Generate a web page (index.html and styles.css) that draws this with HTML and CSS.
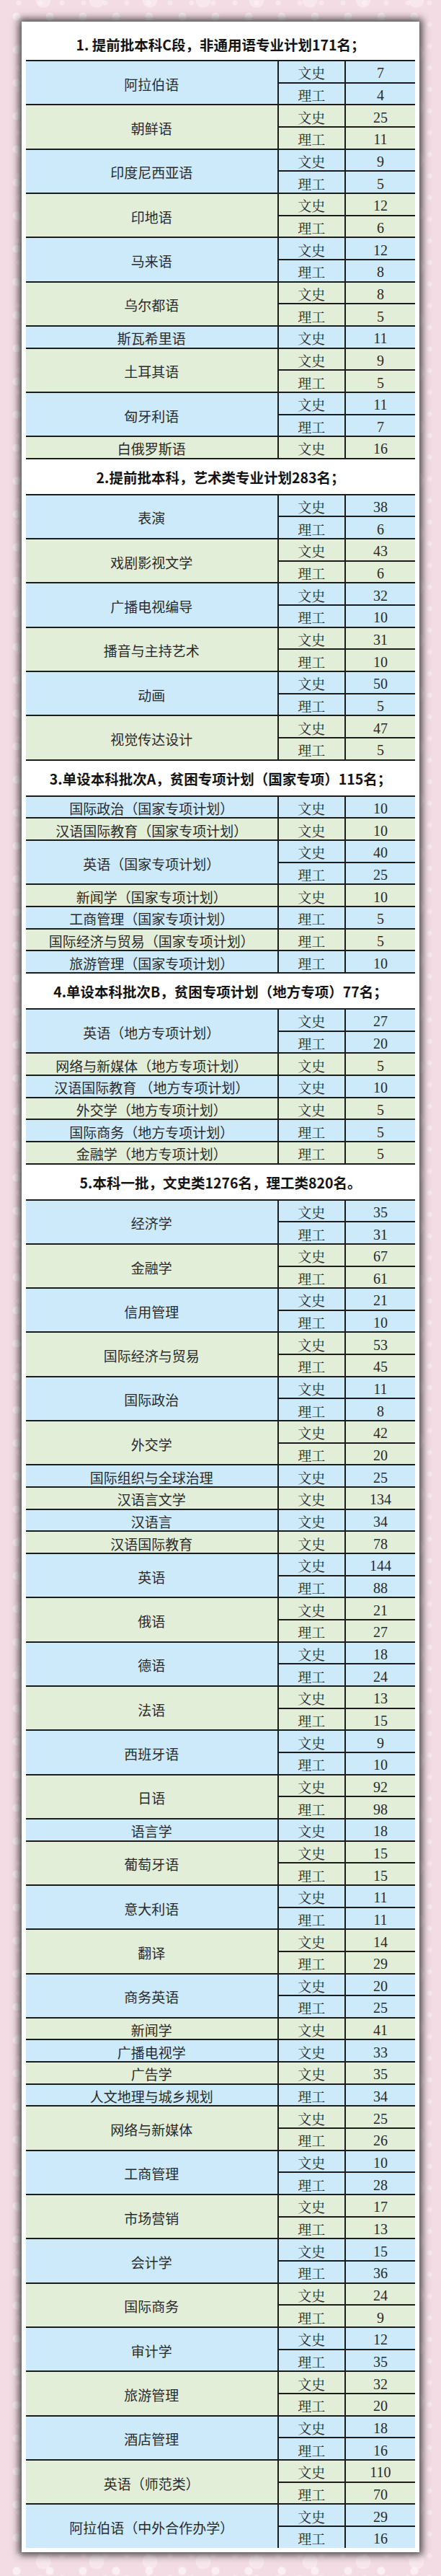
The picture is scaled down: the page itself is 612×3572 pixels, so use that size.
FILE: index.html
```html
<!DOCTYPE html>
<html lang="zh-CN">
<head>
<meta charset="utf-8">
<title>招生计划</title>
<link rel="stylesheet" href="styles.css">
</head>
<body>
<div class="page">
<div class="card">

<h2 class="title first">1. 提前批本科C段，非通用语专业计划171名；</h2>
<div class="table">
  <div class="row"><div class="name">阿拉伯语</div><div class="subs"><div class="sub"><span class="type">文史</span><span class="num">7</span></div><div class="sub"><span class="type">理工</span><span class="num">4</span></div></div></div>
  <div class="row"><div class="name">朝鲜语</div><div class="subs"><div class="sub"><span class="type">文史</span><span class="num">25</span></div><div class="sub"><span class="type">理工</span><span class="num">11</span></div></div></div>
  <div class="row"><div class="name">印度尼西亚语</div><div class="subs"><div class="sub"><span class="type">文史</span><span class="num">9</span></div><div class="sub"><span class="type">理工</span><span class="num">5</span></div></div></div>
  <div class="row"><div class="name">印地语</div><div class="subs"><div class="sub"><span class="type">文史</span><span class="num">12</span></div><div class="sub"><span class="type">理工</span><span class="num">6</span></div></div></div>
  <div class="row"><div class="name">马来语</div><div class="subs"><div class="sub"><span class="type">文史</span><span class="num">12</span></div><div class="sub"><span class="type">理工</span><span class="num">8</span></div></div></div>
  <div class="row"><div class="name">乌尔都语</div><div class="subs"><div class="sub"><span class="type">文史</span><span class="num">8</span></div><div class="sub"><span class="type">理工</span><span class="num">5</span></div></div></div>
  <div class="row"><div class="name">斯瓦希里语</div><div class="subs"><div class="sub"><span class="type">文史</span><span class="num">11</span></div></div></div>
  <div class="row"><div class="name">土耳其语</div><div class="subs"><div class="sub"><span class="type">文史</span><span class="num">9</span></div><div class="sub"><span class="type">理工</span><span class="num">5</span></div></div></div>
  <div class="row"><div class="name">匈牙利语</div><div class="subs"><div class="sub"><span class="type">文史</span><span class="num">11</span></div><div class="sub"><span class="type">理工</span><span class="num">7</span></div></div></div>
  <div class="row"><div class="name">白俄罗斯语</div><div class="subs"><div class="sub"><span class="type">文史</span><span class="num">16</span></div></div></div>
</div>

<h2 class="title">2.提前批本科，艺术类专业计划283名；</h2>
<div class="table">
  <div class="row"><div class="name">表演</div><div class="subs"><div class="sub"><span class="type">文史</span><span class="num">38</span></div><div class="sub"><span class="type">理工</span><span class="num">6</span></div></div></div>
  <div class="row"><div class="name">戏剧影视文学</div><div class="subs"><div class="sub"><span class="type">文史</span><span class="num">43</span></div><div class="sub"><span class="type">理工</span><span class="num">6</span></div></div></div>
  <div class="row"><div class="name">广播电视编导</div><div class="subs"><div class="sub"><span class="type">文史</span><span class="num">32</span></div><div class="sub"><span class="type">理工</span><span class="num">10</span></div></div></div>
  <div class="row"><div class="name">播音与主持艺术</div><div class="subs"><div class="sub"><span class="type">文史</span><span class="num">31</span></div><div class="sub"><span class="type">理工</span><span class="num">10</span></div></div></div>
  <div class="row"><div class="name">动画</div><div class="subs"><div class="sub"><span class="type">文史</span><span class="num">50</span></div><div class="sub"><span class="type">理工</span><span class="num">5</span></div></div></div>
  <div class="row"><div class="name">视觉传达设计</div><div class="subs"><div class="sub"><span class="type">文史</span><span class="num">47</span></div><div class="sub"><span class="type">理工</span><span class="num">5</span></div></div></div>
</div>

<h2 class="title">3.单设本科批次A，贫困专项计划（国家专项）115名；</h2>
<div class="table">
  <div class="row"><div class="name">国际政治（国家专项计划）</div><div class="subs"><div class="sub"><span class="type">文史</span><span class="num">10</span></div></div></div>
  <div class="row"><div class="name">汉语国际教育（国家专项计划）</div><div class="subs"><div class="sub"><span class="type">文史</span><span class="num">10</span></div></div></div>
  <div class="row"><div class="name">英语（国家专项计划）</div><div class="subs"><div class="sub"><span class="type">文史</span><span class="num">40</span></div><div class="sub"><span class="type">理工</span><span class="num">25</span></div></div></div>
  <div class="row"><div class="name">新闻学（国家专项计划）</div><div class="subs"><div class="sub"><span class="type">文史</span><span class="num">10</span></div></div></div>
  <div class="row"><div class="name">工商管理（国家专项计划）</div><div class="subs"><div class="sub"><span class="type">理工</span><span class="num">5</span></div></div></div>
  <div class="row"><div class="name">国际经济与贸易（国家专项计划）</div><div class="subs"><div class="sub"><span class="type">理工</span><span class="num">5</span></div></div></div>
  <div class="row"><div class="name">旅游管理（国家专项计划）</div><div class="subs"><div class="sub"><span class="type">理工</span><span class="num">10</span></div></div></div>
</div>

<h2 class="title">4.单设本科批次B，贫困专项计划（地方专项）77名；</h2>
<div class="table">
  <div class="row"><div class="name">英语（地方专项计划）</div><div class="subs"><div class="sub"><span class="type">文史</span><span class="num">27</span></div><div class="sub"><span class="type">理工</span><span class="num">20</span></div></div></div>
  <div class="row"><div class="name">网络与新媒体（地方专项计划）</div><div class="subs"><div class="sub"><span class="type">文史</span><span class="num">5</span></div></div></div>
  <div class="row"><div class="name">汉语国际教育 （地方专项计划）</div><div class="subs"><div class="sub"><span class="type">文史</span><span class="num">10</span></div></div></div>
  <div class="row"><div class="name">外交学（地方专项计划）</div><div class="subs"><div class="sub"><span class="type">文史</span><span class="num">5</span></div></div></div>
  <div class="row"><div class="name">国际商务（地方专项计划）</div><div class="subs"><div class="sub"><span class="type">理工</span><span class="num">5</span></div></div></div>
  <div class="row"><div class="name">金融学（地方专项计划）</div><div class="subs"><div class="sub"><span class="type">理工</span><span class="num">5</span></div></div></div>
</div>

<h2 class="title">5.本科一批，文史类1276名，理工类820名。</h2>
<div class="table last">
  <div class="row"><div class="name">经济学</div><div class="subs"><div class="sub"><span class="type">文史</span><span class="num">35</span></div><div class="sub"><span class="type">理工</span><span class="num">31</span></div></div></div>
  <div class="row"><div class="name">金融学</div><div class="subs"><div class="sub"><span class="type">文史</span><span class="num">67</span></div><div class="sub"><span class="type">理工</span><span class="num">61</span></div></div></div>
  <div class="row"><div class="name">信用管理</div><div class="subs"><div class="sub"><span class="type">文史</span><span class="num">21</span></div><div class="sub"><span class="type">理工</span><span class="num">10</span></div></div></div>
  <div class="row"><div class="name">国际经济与贸易</div><div class="subs"><div class="sub"><span class="type">文史</span><span class="num">53</span></div><div class="sub"><span class="type">理工</span><span class="num">45</span></div></div></div>
  <div class="row"><div class="name">国际政治</div><div class="subs"><div class="sub"><span class="type">文史</span><span class="num">11</span></div><div class="sub"><span class="type">理工</span><span class="num">8</span></div></div></div>
  <div class="row"><div class="name">外交学</div><div class="subs"><div class="sub"><span class="type">文史</span><span class="num">42</span></div><div class="sub"><span class="type">理工</span><span class="num">20</span></div></div></div>
  <div class="row"><div class="name">国际组织与全球治理</div><div class="subs"><div class="sub"><span class="type">文史</span><span class="num">25</span></div></div></div>
  <div class="row"><div class="name">汉语言文学</div><div class="subs"><div class="sub"><span class="type">文史</span><span class="num">134</span></div></div></div>
  <div class="row"><div class="name">汉语言</div><div class="subs"><div class="sub"><span class="type">文史</span><span class="num">34</span></div></div></div>
  <div class="row"><div class="name">汉语国际教育</div><div class="subs"><div class="sub"><span class="type">文史</span><span class="num">78</span></div></div></div>
  <div class="row"><div class="name">英语</div><div class="subs"><div class="sub"><span class="type">文史</span><span class="num">144</span></div><div class="sub"><span class="type">理工</span><span class="num">88</span></div></div></div>
  <div class="row"><div class="name">俄语</div><div class="subs"><div class="sub"><span class="type">文史</span><span class="num">21</span></div><div class="sub"><span class="type">理工</span><span class="num">27</span></div></div></div>
  <div class="row"><div class="name">德语</div><div class="subs"><div class="sub"><span class="type">文史</span><span class="num">18</span></div><div class="sub"><span class="type">理工</span><span class="num">24</span></div></div></div>
  <div class="row"><div class="name">法语</div><div class="subs"><div class="sub"><span class="type">文史</span><span class="num">13</span></div><div class="sub"><span class="type">理工</span><span class="num">15</span></div></div></div>
  <div class="row"><div class="name">西班牙语</div><div class="subs"><div class="sub"><span class="type">文史</span><span class="num">9</span></div><div class="sub"><span class="type">理工</span><span class="num">10</span></div></div></div>
  <div class="row"><div class="name">日语</div><div class="subs"><div class="sub"><span class="type">文史</span><span class="num">92</span></div><div class="sub"><span class="type">理工</span><span class="num">98</span></div></div></div>
  <div class="row"><div class="name">语言学</div><div class="subs"><div class="sub"><span class="type">文史</span><span class="num">18</span></div></div></div>
  <div class="row"><div class="name">葡萄牙语</div><div class="subs"><div class="sub"><span class="type">文史</span><span class="num">15</span></div><div class="sub"><span class="type">理工</span><span class="num">15</span></div></div></div>
  <div class="row"><div class="name">意大利语</div><div class="subs"><div class="sub"><span class="type">文史</span><span class="num">11</span></div><div class="sub"><span class="type">理工</span><span class="num">11</span></div></div></div>
  <div class="row"><div class="name">翻译</div><div class="subs"><div class="sub"><span class="type">文史</span><span class="num">14</span></div><div class="sub"><span class="type">理工</span><span class="num">29</span></div></div></div>
  <div class="row"><div class="name">商务英语</div><div class="subs"><div class="sub"><span class="type">文史</span><span class="num">20</span></div><div class="sub"><span class="type">理工</span><span class="num">25</span></div></div></div>
  <div class="row"><div class="name">新闻学</div><div class="subs"><div class="sub"><span class="type">文史</span><span class="num">41</span></div></div></div>
  <div class="row"><div class="name">广播电视学</div><div class="subs"><div class="sub"><span class="type">文史</span><span class="num">33</span></div></div></div>
  <div class="row"><div class="name">广告学</div><div class="subs"><div class="sub"><span class="type">文史</span><span class="num">35</span></div></div></div>
  <div class="row"><div class="name">人文地理与城乡规划</div><div class="subs"><div class="sub"><span class="type">理工</span><span class="num">34</span></div></div></div>
  <div class="row"><div class="name">网络与新媒体</div><div class="subs"><div class="sub"><span class="type">文史</span><span class="num">25</span></div><div class="sub"><span class="type">理工</span><span class="num">26</span></div></div></div>
  <div class="row"><div class="name">工商管理</div><div class="subs"><div class="sub"><span class="type">文史</span><span class="num">10</span></div><div class="sub"><span class="type">理工</span><span class="num">28</span></div></div></div>
  <div class="row"><div class="name">市场营销</div><div class="subs"><div class="sub"><span class="type">文史</span><span class="num">17</span></div><div class="sub"><span class="type">理工</span><span class="num">13</span></div></div></div>
  <div class="row"><div class="name">会计学</div><div class="subs"><div class="sub"><span class="type">文史</span><span class="num">15</span></div><div class="sub"><span class="type">理工</span><span class="num">36</span></div></div></div>
  <div class="row"><div class="name">国际商务</div><div class="subs"><div class="sub"><span class="type">文史</span><span class="num">24</span></div><div class="sub"><span class="type">理工</span><span class="num">9</span></div></div></div>
  <div class="row"><div class="name">审计学</div><div class="subs"><div class="sub"><span class="type">文史</span><span class="num">12</span></div><div class="sub"><span class="type">理工</span><span class="num">35</span></div></div></div>
  <div class="row"><div class="name">旅游管理</div><div class="subs"><div class="sub"><span class="type">文史</span><span class="num">32</span></div><div class="sub"><span class="type">理工</span><span class="num">20</span></div></div></div>
  <div class="row"><div class="name">酒店管理</div><div class="subs"><div class="sub"><span class="type">文史</span><span class="num">18</span></div><div class="sub"><span class="type">理工</span><span class="num">16</span></div></div></div>
  <div class="row"><div class="name">英语（师范类）</div><div class="subs"><div class="sub"><span class="type">文史</span><span class="num">110</span></div><div class="sub"><span class="type">理工</span><span class="num">70</span></div></div></div>
  <div class="row"><div class="name">阿拉伯语（中外合作办学）</div><div class="subs"><div class="sub"><span class="type">文史</span><span class="num">29</span></div><div class="sub"><span class="type">理工</span><span class="num">16</span></div></div></div>
</div>

</div>
</div>
</body>
</html>
```

FILE: styles.css
```css
html, body {
  margin: 0;
  padding: 0;
}

body {
  background-color: #f4dce5;
  background-image:
    radial-gradient(circle, rgba(255, 255, 255, 0.55) 0 5px, transparent 6px),
    radial-gradient(circle, rgba(255, 255, 255, 0.35) 0 10px, transparent 11px),
    radial-gradient(circle, rgba(255, 240, 245, 0.5) 0 3px, transparent 4px);
  background-size: 46px 46px, 74px 74px, 30px 30px;
  background-position: 0 0, 23px 37px, 11px 19px;
  font-family: "Noto Sans CJK SC", "Liberation Sans", sans-serif;
}

.page {
  padding: 30px 30px 31px;
}

.card {
  background: #ffffff;
  padding: 5px 6px 6px;
  box-shadow: 0 0 10px 4px rgba(45, 45, 45, 0.85);
}

.title {
  margin: 0;
  height: 48px;
  box-sizing: border-box;
  display: flex;
  align-items: center;
  justify-content: center;
  font-size: 19.5px;
  line-height: 24px;
  font-weight: 700;
  color: #141414;
  padding-top: 2px;
  white-space: nowrap;
}

.title.first {
  padding-top: 6px;
}

.table {
  border-bottom: 2px solid #1c1c1c;
}

.table.last {
  border-bottom: none;
}

.row {
  display: flex;
  border-top: 2px solid #1c1c1c;
  background: #cceafa;
}

.row:nth-child(even) {
  background: #e3eed9;
}

.name {
  flex: 0 0 350.6px;
  border-right: 2px solid #1c1c1c;
  display: flex;
  align-items: center;
  justify-content: center;
  box-sizing: border-box;
  padding-top: 4px;
  font-family: "Noto Sans CJK SC", sans-serif;
  font-size: 19px;
  line-height: 22px;
  color: #2a2a2a;
  white-space: pre;
}

.subs {
  flex: 1;
  display: flex;
  flex-direction: column;
}

.sub {
  display: flex;
  height: 28.67px;
}

.sub + .sub {
  border-top: 2px solid #1c1c1c;
}

.type {
  flex: 0 0 93.4px;
  border-right: 2px solid #1c1c1c;
  display: flex;
  align-items: center;
  justify-content: center;
  box-sizing: border-box;
  padding-top: 4px;
  font-family: "Noto Serif CJK SC", "Noto Sans CJK SC", serif;
  font-size: 19px;
  line-height: 22px;
  color: #2a2a2a;
}

.num {
  flex: 1;
  display: flex;
  align-items: center;
  justify-content: center;
  box-sizing: border-box;
  padding-top: 4px;
  font-family: "Liberation Serif", serif;
  font-size: 20px;
  line-height: 22px;
  color: #2a2a2a;
}
```
